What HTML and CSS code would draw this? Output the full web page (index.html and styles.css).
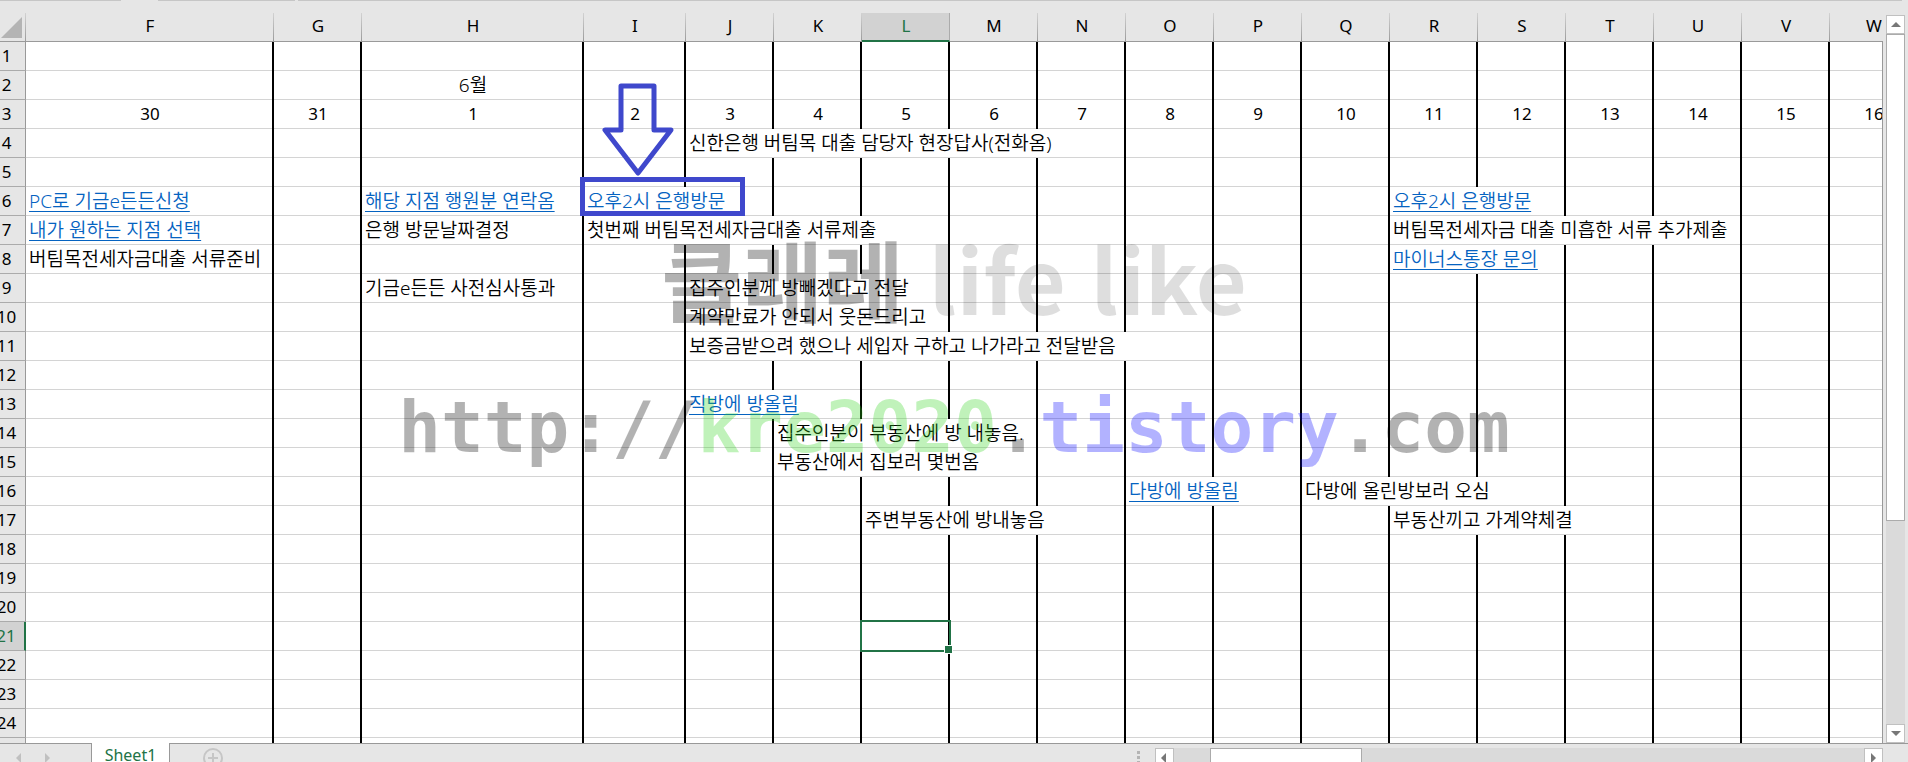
FILE: index.html
```html
<!DOCTYPE html>
<html lang="ko">
<head>
  <meta charset="UTF-8" />
  <meta name="viewport" content="width=device-width, initial-scale=1.0" />
  <title>Sheet1</title>
  <link rel="stylesheet" href="styles.css">
</head>
<body>
  <div class="ribbon-edge"><span class="edge-short"></span><span class="edge-mid"></span><span class="edge-long"></span></div>

  <main class="workspace">
    <div class="sheet">
      <table class="grid">
        <colgroup id="gridCols"></colgroup>
        <thead><tr id="gridHead"></tr></thead>
        <tbody id="gridBody"></tbody>
      </table>

      <svg class="arrow" width="74" height="95" viewBox="0 0 74 95" aria-hidden="true">
        <path d="M20 3H53V47H70L37 90L4 47H20Z" fill="none" stroke="#3f48cc" stroke-width="5" stroke-linejoin="round"/>
      </svg>
      <div class="mark-box"></div>
    </div>

    <div class="vscroll">
      <button class="scroll-button" aria-label="위로"><svg width="10" height="6" viewBox="0 0 10 6"><path d="M5 0L10 5H0Z"/></svg></button>
      <div class="vthumb"></div>
      <div class="track"></div>
      <button class="scroll-button" aria-label="아래로"><svg width="10" height="6" viewBox="0 0 10 6"><path d="M0 0H10L5 5Z"/></svg></button>
    </div>
  </main>

  <footer class="tab-bar">
    <div class="tab-nav">
      <button aria-label="이전 시트"><svg width="6" height="10" viewBox="0 0 6 10"><path d="M5 0V10L0 5Z"/></svg></button>
      <button aria-label="다음 시트"><svg width="6" height="10" viewBox="0 0 6 10"><path d="M0 0V10L5 5Z"/></svg></button>
    </div>
    <button class="tab">Sheet1</button>
    <div class="tab-rest">
      <button class="add-sheet" aria-label="새 시트">
        <svg width="20" height="20" viewBox="0 0 20 20"><circle cx="10" cy="10" r="9"/><path d="M10 5V15M5 10H15"/></svg>
      </button>
      <svg class="grip" width="3" height="14" viewBox="0 0 3 14"><path d="M0 0h3v3H0zM0 5h3v3H0zM0 10h3v3H0z"/></svg>
      <div class="hscroll">
        <button class="scroll-button" aria-label="왼쪽"><svg width="6" height="10" viewBox="0 0 6 10"><path d="M5 0V10L0 5Z"/></svg></button>
        <div class="hthumb"></div>
        <div class="track"></div>
        <button class="scroll-button" aria-label="오른쪽"><svg width="6" height="10" viewBox="0 0 6 10"><path d="M0 0V10L5 5Z"/></svg></button>
      </div>
    </div>
  </footer>

  <div class="watermark">
    <p class="wm-name">클래레 <span class="wm-light">life like</span></p>
    <p class="wm-url">http://<span class="wm-green">kre2020</span>.<span class="wm-blue">tistory</span>.com</p>
  </div>

  <script>
    const columns = 'FGHIJKLMNOPQRSTUVW'.split('');
    const widths = { F: 248, H: 222, I: 102 };
    const rowCount = 25;
    const selected = { col: 'L', row: 21 };

    // span: how many columns the text runs over
    const cells = {
      H2: { text: '6월', center: true },
      J4: { text: '신한은행 버팀목 대출 담당자 현장답사(전화옴)', span: 5 },
      F6: { text: 'PC로 기금e든든신청', link: true },
      H6: { text: '해당 지점 행원분 연락옴', link: true },
      I6: { text: '오후2시 은행방문', link: true, span: 2 },
      R6: { text: '오후2시 은행방문', link: true, span: 2 },
      F7: { text: '내가 원하는 지점 선택', link: true },
      H7: { text: '은행 방문날짜결정' },
      I7: { text: '첫번째 버팀목전세자금대출 서류제출', span: 4 },
      R7: { text: '버팀목전세자금 대출 미흡한 서류 추가제출', span: 4 },
      F8: { text: '버팀목전세자금대출 서류준비' },
      R8: { text: '마이너스통장 문의', link: true, span: 2 },
      H9: { text: '기금e든든 사전심사통과' },
      J9: { text: '집주인분께 방빼겠다고 전달', span: 3 },
      J10: { text: '계약만료가 안되서 웃돈드리고', span: 3 },
      J11: { text: '보증금받으려 했으나 세입자 구하고 나가라고 전달받음', span: 6 },
      J13: { text: '직방에 방올림', link: true, span: 2 },
      K14: { text: '집주인분이 부동산에 방 내놓음.', span: 3 },
      K15: { text: '부동산에서 집보러 몇번옴', span: 3 },
      O16: { text: '다방에 방올림', link: true, span: 2 },
      Q16: { text: '다방에 올린방보러 오심', span: 3 },
      L17: { text: '주변부동산에 방내놓음', span: 3 },
      R17: { text: '부동산끼고 가계약체결', span: 3 }
    };

    // row 3 holds the days: 30, 31, 1, 2, ...
    columns.forEach((col, i) => {
      cells[col + 3] = { text: i < 2 ? 30 + i : i - 1, day: true };
    });

    function addHeader(row, text, scope, isSelected) {
      const th = document.createElement('th');
      th.scope = scope;
      th.textContent = text;
      if (isSelected) th.className = 'selected';
      row.appendChild(th);
    }

    const cols = document.getElementById('gridCols');
    const head = document.getElementById('gridHead');
    const body = document.getElementById('gridBody');

    cols.innerHTML = '<col class="col-rows">';
    head.innerHTML = '<td class="corner"><svg width="21" height="21" viewBox="0 0 21 21"><path d="M21 0V21H0Z"/></svg></td>';
    columns.forEach(name => {
      const col = document.createElement('col');
      col.style.width = (widths[name] || 88) + 'px';
      cols.appendChild(col);
      addHeader(head, name, 'col', name === selected.col);
    });

    for (let r = 1; r <= rowCount; r++) {
      const tr = document.createElement('tr');
      addHeader(tr, r, 'row', r === selected.row);
      for (let c = 0; c < columns.length;) {
        const cell = cells[columns[c] + r] || {};
        const td = document.createElement('td');
        if (cell.span) td.colSpan = cell.span;
        if (cell.day) td.className = 'day';
        if (cell.center) td.className = 'center';
        if (columns[c] === selected.col && r === selected.row) td.className = 'active';
        if (cell.link) {
          td.innerHTML = `<a href="#">${cell.text}</a>`;
        } else if (cell.text) {
          td.textContent = cell.text;
        }
        tr.appendChild(td);
        c += cell.span || 1;
      }
      body.appendChild(tr);
    }
  </script>
</body>
</html>
```
FILE: styles.css
```css
* {
  box-sizing: border-box;
}
body {
  margin: 0;
  height: 100vh;
  display: flex;
  flex-direction: column;
  overflow: hidden;
  position: relative;
  background: #e6e6e6;
  color: #000;
  font-family: "Noto Sans", "Noto Sans CJK KR", sans-serif;
  font-size: 17px;
}
button {
  padding: 0;
  border: 0;
  background: none;
  font: inherit;
}
svg {
  display: block;
}

.ribbon-edge {
  display: flex;
  flex: none;
  height: 13px;
  padding-right: 6px;
}
.ribbon-edge span {
  height: 1px;
  background: #c6c6c6;
}
.edge-short {
  width: 121px;
  margin-right: 37px;
}
.edge-mid {
  width: 137px;
  margin-right: 3px;
}
.edge-long {
  flex: 1;
}

.workspace {
  flex: 1;
  min-height: 0;
  display: flex;
}
.sheet {
  flex: 1;
  min-width: 0;
  position: relative;
  overflow: hidden;
}
.sheet::after {
  content: "";
  position: absolute;
  top: 28px;
  right: 0;
  bottom: 0;
  border-right: 1px solid #999;
}

/* first column is scrolled a little under the window edge */
.grid {
  width: 1930px;
  margin-left: -12px;
  table-layout: fixed;
  border-collapse: separate;
  border-spacing: 0;
}
.col-rows {
  width: 38px;
}
.grid th {
  padding: 0;
  font-weight: 400;
  line-height: 28px;
}
.grid thead th,
.grid .corner {
  height: 29px;
  padding: 0;
  border-bottom: 1px solid #999;
  border-right: 1px solid;
  border-image: linear-gradient(#d4d4d4, #999) 1;
}
.grid thead th {
  padding: 0 0 2px 1px;
  line-height: 26px;
}
.grid thead .selected {
  color: #217346;
  background: #d2d2d2;
  border-bottom: 2px solid #217346;
  border-image: none;
  border-right: 1px solid #ababab;
  padding-bottom: 1px;
}
.corner svg {
  margin: 4px 3px 3px 13px;
  fill: #b4b4b4;
}
.grid tbody th {
  height: 29px;
  border-right: 1px solid #999;
  border-bottom: 1px solid #ababab;
}
.grid tbody .selected {
  color: #217346;
  background: #d2d2d2;
  border-right: 2px solid #217346;
}
.grid tbody td {
  height: 29px;
  padding: 0 0 1px 3px;
  background: #fff;
  border-right: 2px solid #000;
  box-shadow: inset 0 -1px #d4d4d4;
  font-size: 19px;
  font-weight: 350;
  line-height: 28px;
  white-space: nowrap;
}
.grid tbody .day,
.grid tbody .center {
  padding-left: 2px;
  text-align: center;
}
.grid tbody .day {
  font-size: 17px;
  font-weight: 400;
}
.grid a {
  color: #0563c1;
  text-decoration: underline;
  text-decoration-thickness: 1px;
  text-underline-offset: 3px;
}
.grid .active {
  position: relative;
}
.active::before {
  content: "";
  position: absolute;
  inset: -2px -3px -1px -2px;
  border: 2px solid #217346;
}
.active::after {
  content: "";
  position: absolute;
  right: -5px;
  bottom: -3px;
  width: 7px;
  height: 7px;
  background: #217346;
  border: 1px solid #fff;
}

.arrow {
  position: absolute;
  left: 601px;
  top: 70px;
}
.mark-box {
  position: absolute;
  left: 580px;
  top: 164px;
  width: 165px;
  height: 39px;
  border: 5px solid #3f48cc;
}

.track {
  flex: 1;
  background: #dadada;
}
.scroll-button {
  flex: none;
  width: 19px;
  height: 19px;
  display: flex;
  align-items: center;
  justify-content: center;
  background: #fff;
  border: 1px solid #c0c0c0;
}
.scroll-button svg {
  fill: #777;
}
.vscroll {
  width: 25px;
  padding: 2px 3px 0;
  display: flex;
  flex-direction: column;
}
.vthumb {
  height: 70%;
  flex: none;
  max-height: calc(100% - 241px);
  background: #fff;
  border: 1px solid #ababab;
}

.tab-bar {
  flex: none;
  height: 19px;
  display: flex;
}
.tab-nav {
  flex: none;
  width: 92px;
  padding: 9px 0 0 16px;
  display: flex;
  align-items: flex-start;
  gap: 23px;
  border-top: 1px solid #999;
  border-right: 1px solid #999;
}
.tab-nav svg {
  fill: #c0c0c0;
}
.tab {
  flex: none;
  width: 77px;
  height: 24px;
  line-height: 24px;
  font-size: 16px;
  color: #217346;
  background: #fff;
}
.tab-rest {
  flex: 1;
  display: flex;
  align-items: flex-start;
  padding-right: 25px;
  border-top: 1px solid #999;
  border-left: 1px solid #999;
}
.add-sheet {
  margin: 4px auto 0 33px;
}
.add-sheet svg {
  fill: none;
  stroke: #c6c6c6;
  stroke-width: 2;
}
.grip {
  flex: none;
  margin: 7px 15px 0 0;
  fill: #b4b4b4;
}
.hscroll {
  width: 42.5%;
  margin-top: 4px;
  display: flex;
  background: #dadada;
}
.hthumb {
  width: 152px;
  margin-left: 36px;
  background: #fff;
  border: 1px solid #ababab;
}

.watermark {
  position: absolute;
  top: 208px;
  left: 0;
  right: 0;
  text-align: center;
  font-weight: 700;
  color: rgba(0, 0, 0, 0.3);
  pointer-events: none;
  white-space: nowrap;
}
.watermark p {
  margin: 0;
}
.wm-name {
  font-family: "Noto Sans CJK KR", sans-serif;
  font-size: 88px;
  line-height: 138px;
}
.wm-url {
  font-family: "DejaVu Sans Mono", monospace;
  font-size: 71px;
  line-height: 164px;
}
.wm-light {
  color: rgba(0, 0, 0, 0.13);
}
.wm-green {
  color: rgba(48, 212, 28, 0.3);
}
.wm-blue {
  color: rgba(0, 0, 255, 0.3);
}
```
